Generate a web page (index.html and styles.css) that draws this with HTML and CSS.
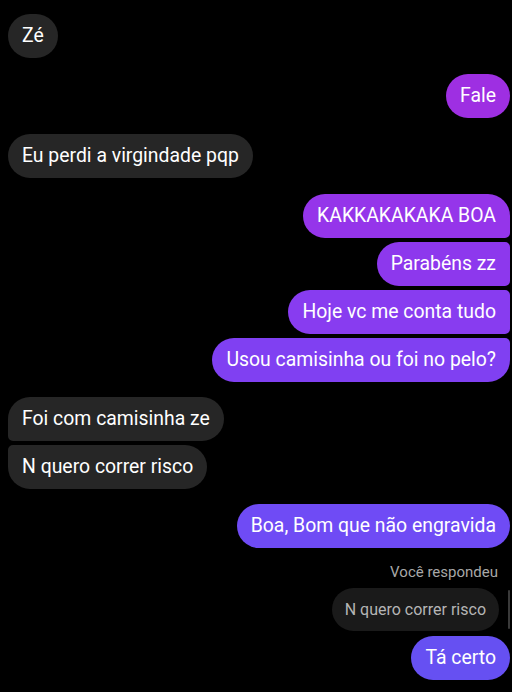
FILE: index.html
```html
<!DOCTYPE html>
<html lang="pt">
<head>
    <meta charset="UTF-8">
    <meta name="viewport" content="width=device-width, initial-scale=1.0">
    <link rel="stylesheet" href="styles.css">
</head>
<body>

<!-- Chat thread -->
<div class="thread">
    <div class="msg in solo top">Zé</div>

    <div class="msg out solo gap" style="background-color: #9e2fe2;">Fale</div>

    <div class="msg in solo gap">Eu perdi a virgindade pqp</div>

    <div class="msg out first gap" style="background-color: #9535ea;">KAKKAKAKAKA BOA</div>
    <div class="msg out mid" style="background-color: #8d38ed;">Parabéns zz</div>
    <div class="msg out mid" style="background-color: #883cf0;">Hoje vc me conta tudo</div>
    <div class="msg out last" style="background-color: #8040f2;">Usou camisinha ou foi no pelo?</div>

    <div class="msg in first gap-sm">Foi com camisinha ze</div>
    <div class="msg in last">N quero correr risco</div>

    <div class="msg out solo gap-sm" style="background-color: #6f4bf5;">Boa, Bom que não engravida</div>

    <div class="reply">
        <span class="reply-label">Você respondeu</span>
        <div class="reply-quote">
            <div class="quote">N quero correr risco</div>
            <div class="quote-bar"></div>
        </div>
    </div>
    <div class="msg out solo tight" style="background-color: #6650f2;">Tá certo</div>
</div>

</body>
</html>
```

FILE: styles.css
```css
body {
  margin: 0;
  padding: 0;
  background-color: #000;
  color: #fff;
  font-family: Roboto, "Noto Sans", Arial, sans-serif;
}
.thread {
  display: flex;
  flex-direction: column;
  padding: 14px 2px 12px 8px;
}
.msg {
  font-size: 19.4px;
  line-height: 22px;
  padding: 11px 14px;
  border-radius: 22px;
  max-width: 440px;
  margin-top: 4px;
}
.msg.top {
  margin-top: 0;
}
.msg.gap {
  margin-top: 16px;
}
.msg.gap-sm {
  margin-top: 15px;
}
.msg.tight {
  margin-top: 5px;
}
.in {
  align-self: flex-start;
  background-color: #262626;
}
.out {
  align-self: flex-end;
  background-color: #7b42f3;
}
.in.first { border-bottom-left-radius: 5px; }
.in.last { border-top-left-radius: 5px; }
.out.first { border-bottom-right-radius: 5px; }
.out.mid { border-top-right-radius: 5px; border-bottom-right-radius: 5px; }
.out.last { border-top-right-radius: 5px; }

.reply {
  display: flex;
  flex-direction: column;
  align-items: flex-end;
  margin-top: 15px;
}
.reply-label {
  font-size: 15px;
  line-height: 18px;
  color: #a8a8a8;
  margin-right: 12px;
}
.reply-quote {
  display: flex;
  align-items: stretch;
  gap: 9px;
  margin-top: 7px;
}
.quote {
  background-color: #1a1a1a;
  color: #b5b5b5;
  font-size: 16px;
  line-height: 21px;
  padding: 11px 13px;
  border-radius: 22px;
}
.quote-bar {
  width: 2px;
  background-color: #3a3a3a;
  border-radius: 1px;
  margin: 2px 0;
}
```
